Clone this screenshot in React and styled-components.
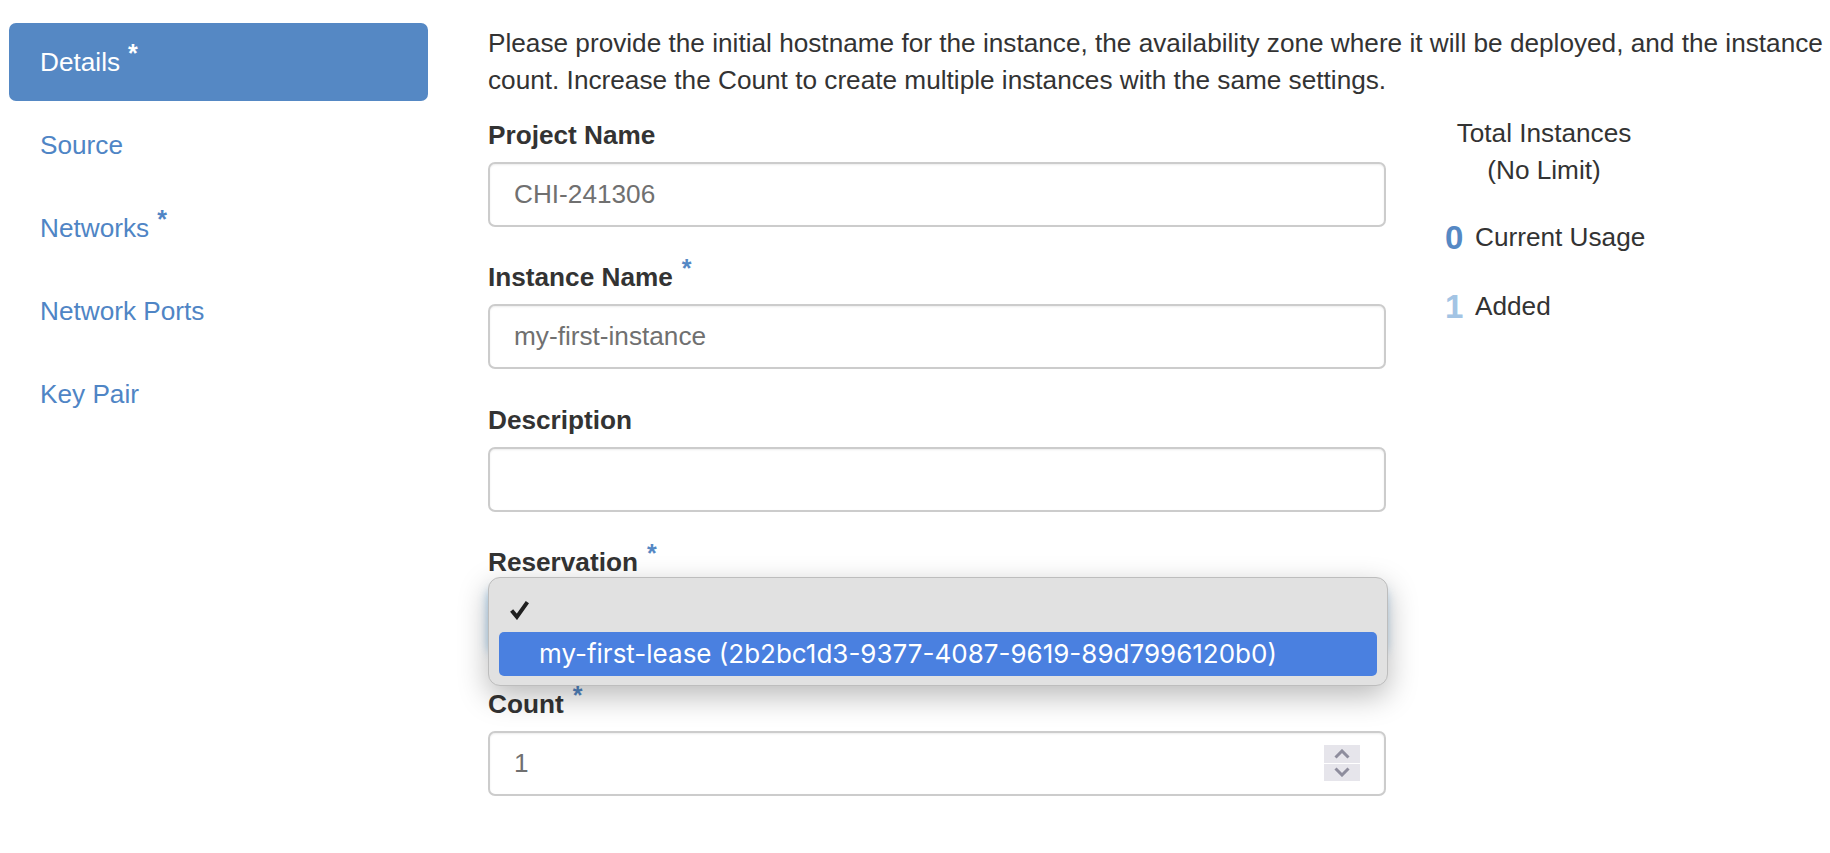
import React from 'react';
import styled, { createGlobalStyle } from 'styled-components';

const Global = createGlobalStyle`
  html, body {
    margin: 0;
    padding: 0;
    background: #fff;
    overflow: hidden;
  }
  body {
    font-family: "Liberation Sans", Arial, sans-serif;
    font-size: 26.2px;
    line-height: 37px;
    color: #333;
  }
`;

const Page = styled.div`
  display: flex;
  width: 1830px;
  height: 853px;
  overflow: hidden;
`;

const Sidebar = styled.ul`
  list-style: none;
  width: 419px;
  margin: 23px 0 0 9px;
  padding: 0;
  flex-shrink: 0;
`;

const NavItem = styled.li`
  height: 78px;
  margin-bottom: 5px;
  padding: 21px 0 0 31px;
  box-sizing: border-box;
  border-radius: 7px;
  color: ${(p) => (p.$active ? '#fff' : '#4f85c5')};
  background: ${(p) => (p.$active ? '#5588c4' : 'transparent')};
`;

const NavStar = styled.span`
  position: relative;
  top: -9px;
  margin-left: 8px;
  font-size: 25px;
  font-weight: bold;
  line-height: 0;
`;

const Main = styled.div`
  margin-left: 60px;
  padding-top: 25px;
  flex: 1;
  min-width: 0;
`;

const Intro = styled.p`
  margin: 0 0 16px;
  width: 1342px;
`;

const Columns = styled.div`
  display: flex;
`;

const Fields = styled.div`
  display: flex;
  flex-direction: column;
  width: 898px;
`;

const Field = styled.div`
  position: relative;
  height: 142.25px;
`;

const Label = styled.label`
  display: block;
  height: 47px;
  padding-top: 2px;
  box-sizing: border-box;
  line-height: 37px;
  font-weight: bold;
`;

const LabelStar = styled.span`
  position: relative;
  top: -9px;
  margin-left: 9px;
  color: #5588c4;
  font-size: 25px;
  line-height: 0;
`;

const Input = styled.input`
  display: block;
  width: 100%;
  height: 65px;
  padding: 0 24px;
  box-sizing: border-box;
  border: 2px solid #ccc;
  border-radius: 7px;
  background: #fff;
  box-shadow: inset 0 1px 2px rgba(0, 0, 0, 0.08);
  color: #707070;
  font-family: "Liberation Sans", Arial, sans-serif;
  font-size: 26.2px;
  outline: none;
`;

const SelectBehind = styled.div`
  position: absolute;
  top: 47px;
  left: 0;
  width: 100%;
  height: 64px;
  border: 2px solid #66afe9;
  border-radius: 7px;
  box-sizing: border-box;
  box-shadow: 0 0 10px rgba(102, 175, 233, 0.6);
`;

const Popup = styled.div`
  position: absolute;
  top: 35px;
  left: 0;
  width: 900px;
  height: 109px;
  padding: 10px;
  box-sizing: border-box;
  border: 1px solid #bdbdbd;
  border-radius: 12px;
  background: #e1e1e1;
  box-shadow: 0 10px 30px rgba(0, 0, 0, 0.28);
  font-family: Inter, "Liberation Sans", sans-serif;
  font-size: 26px;
  z-index: 2;
`;

const CheckRow = styled.div`
  display: flex;
  align-items: center;
  height: 44px;
  padding-left: 10px;
`;

const OptionRow = styled.div`
  display: flex;
  align-items: center;
  height: 44px;
  padding-left: 40px;
  border-radius: 5px;
  background: #4a80e0;
  color: #fff;
  white-space: nowrap;
`;

const InputWrap = styled.div`
  position: relative;
`;

const Spinner = styled.div`
  position: absolute;
  top: 14px;
  right: 26px;
  display: flex;
  flex-direction: column;
  gap: 1px;
  width: 36px;
`;

const SpinButton = styled.div`
  display: flex;
  align-items: center;
  justify-content: center;
  height: 17.5px;
  background: #e6e5eb;
`;

const Quota = styled.div`
  margin-left: 54px;
`;

const QuotaTitle = styled.div`
  width: 208px;
  text-align: center;
  margin-bottom: 30px;
`;

const QuotaRow = styled.div`
  display: flex;
  align-items: center;
  height: 37px;
  margin-bottom: 32px;
`;

const QuotaNumber = styled.span`
  width: 35px;
  padding-left: 5px;
  box-sizing: border-box;
  color: ${(p) => (p.$light ? '#a3c4e4' : '#5588c4')};
  font-size: 33px;
  font-weight: bold;
`;

const Chevron = ({ up }) => (
  <svg width="16" height="10" viewBox="0 0 16 10">
    <path
      d={up ? 'M1.5 8.5 L8 2 L14.5 8.5' : 'M1.5 1.5 L8 8 L14.5 1.5'}
      fill="none"
      stroke="#8e8d9d"
      strokeWidth="3"
    />
  </svg>
);

const CheckIcon = () => (
  <svg width="21" height="21" viewBox="0 0 20 20">
    <path d="M2.5 11 L7.5 17 L17.5 3" fill="none" stroke="#1f1f1f" strokeWidth="3.8" />
  </svg>
);

const Star = ({ as: Comp }) => <Comp>*</Comp>;

export default function App() {
  return (
    <Page>
      <Global />
      <Sidebar>
        <NavItem $active>
          Details<Star as={NavStar} />
        </NavItem>
        <NavItem>Source</NavItem>
        <NavItem>
          Networks<Star as={NavStar} />
        </NavItem>
        <NavItem>Network Ports</NavItem>
        <NavItem>Key Pair</NavItem>
      </Sidebar>
      <Main>
        <Intro>
          Please provide the initial hostname for the instance, the availability zone where it
          will be deployed, and the instance count. Increase the Count to create multiple
          instances with the same settings.
        </Intro>
        <Columns>
          <Fields>
            <Field>
              <Label>Project Name</Label>
              <Input readOnly value="CHI-241306" />
            </Field>
            <Field>
              <Label>
                Instance Name<Star as={LabelStar} />
              </Label>
              <Input readOnly value="my-first-instance" />
            </Field>
            <Field>
              <Label>Description</Label>
              <Input readOnly value="" />
            </Field>
            <Field>
              <Label>
                Reservation<Star as={LabelStar} />
              </Label>
              <SelectBehind />
              <Popup>
                <CheckRow>
                  <CheckIcon />
                </CheckRow>
                <OptionRow>my-first-lease (2b2bc1d3-9377-4087-9619-89d7996120b0)</OptionRow>
              </Popup>
            </Field>
            <Field>
              <Label>
                Count<Star as={LabelStar} />
              </Label>
              <InputWrap>
                <Input readOnly value="1" />
                <Spinner>
                  <SpinButton>
                    <Chevron up />
                  </SpinButton>
                  <SpinButton>
                    <Chevron />
                  </SpinButton>
                </Spinner>
              </InputWrap>
            </Field>
          </Fields>
          <Quota>
            <QuotaTitle>
              Total Instances
              <br />
              (No Limit)
            </QuotaTitle>
            <QuotaRow>
              <QuotaNumber>0</QuotaNumber>Current Usage
            </QuotaRow>
            <QuotaRow>
              <QuotaNumber $light>1</QuotaNumber>Added
            </QuotaRow>
          </Quota>
        </Columns>
      </Main>
    </Page>
  );
}
